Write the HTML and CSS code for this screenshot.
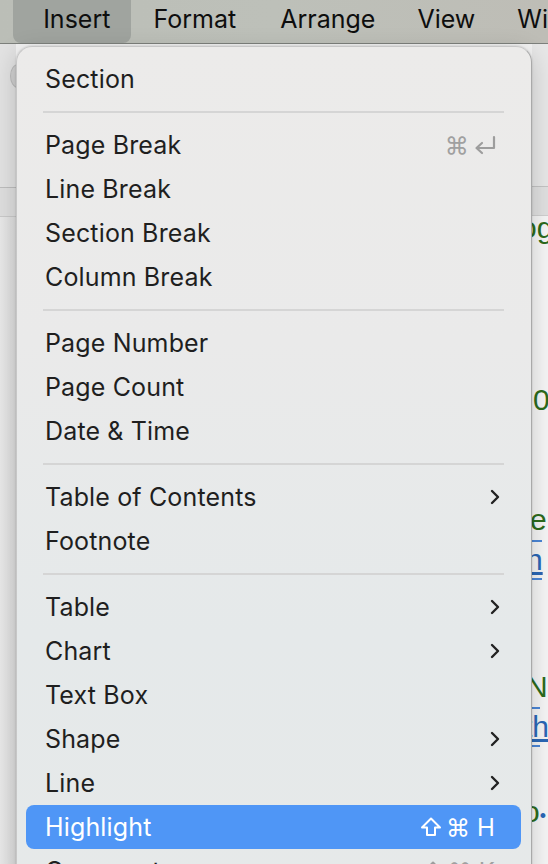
FILE: index.html
```html
<!DOCTYPE html>
<html>
<head>
<meta charset="utf-8">
<link rel="stylesheet" href="styles.css">
</head>
<body>
<div class="screen">
  <div class="menubar">
    <span class="mb-item mb-cut">t</span>
    <span class="mb-item active">Insert</span>
    <span class="mb-item">Format</span>
    <span class="mb-item">Arrange</span>
    <span class="mb-item">View</span>
    <span class="mb-item">Wi</span>
  </div>
  <div class="desk">
    <div class="gutter">
      <div class="g-top"><span class="g-dot"></span></div>
      <div class="g-band"></div>
      <div class="g-rest"></div>
    </div>
    <div class="spacer"></div>
    <div class="doc">
      <div class="d-top"></div>
      <div class="d-band"></div>
      <div class="d-body">
        <div class="d-line green l1">og</div>
        <div class="d-line green l2">0</div>
        <div class="d-line green l3">ei</div>
        <div class="d-link l4">n</div>
        <div class="d-line green l5">No</div>
        <div class="d-link l6">th</div>
        <div class="d-line green l7">o<span class="dot">•</span></div>
      </div>
    </div>
  </div>

  <div class="menu">
    <div class="item"><span class="label">Section</span></div>
    <div class="sep"></div>
    <div class="item"><span class="label">Page Break</span>
      <span class="sc grey">⌘<svg class="ret" width="24" height="20" viewBox="0 0 24 20"><path d="M21 2 V13 H4 M9 8 L3.5 13 L9 18" fill="none" stroke="#9d9d9d" stroke-width="2.2" stroke-linecap="round" stroke-linejoin="round"/></svg></span></div>
    <div class="item"><span class="label">Line Break</span></div>
    <div class="item"><span class="label">Section Break</span></div>
    <div class="item"><span class="label">Column Break</span></div>
    <div class="sep"></div>
    <div class="item"><span class="label">Page Number</span></div>
    <div class="item"><span class="label">Page Count</span></div>
    <div class="item"><span class="label">Date &amp; Time</span></div>
    <div class="sep"></div>
    <div class="item"><span class="label">Table of Contents</span><svg class="chev" width="12" height="18" viewBox="0 0 12 18"><path d="M3 3 L9 9 L3 15" fill="none" stroke="#222" stroke-width="2.4" stroke-linecap="round" stroke-linejoin="round"/></svg></div>
    <div class="item"><span class="label">Footnote</span></div>
    <div class="sep"></div>
    <div class="item"><span class="label">Table</span><svg class="chev" width="12" height="18" viewBox="0 0 12 18"><path d="M3 3 L9 9 L3 15" fill="none" stroke="#222" stroke-width="2.4" stroke-linecap="round" stroke-linejoin="round"/></svg></div>
    <div class="item"><span class="label">Chart</span><svg class="chev" width="12" height="18" viewBox="0 0 12 18"><path d="M3 3 L9 9 L3 15" fill="none" stroke="#222" stroke-width="2.4" stroke-linecap="round" stroke-linejoin="round"/></svg></div>
    <div class="item"><span class="label">Text Box</span></div>
    <div class="item"><span class="label">Shape</span><svg class="chev" width="12" height="18" viewBox="0 0 12 18"><path d="M3 3 L9 9 L3 15" fill="none" stroke="#222" stroke-width="2.4" stroke-linecap="round" stroke-linejoin="round"/></svg></div>
    <div class="item"><span class="label">Line</span><svg class="chev" width="12" height="18" viewBox="0 0 12 18"><path d="M3 3 L9 9 L3 15" fill="none" stroke="#222" stroke-width="2.4" stroke-linecap="round" stroke-linejoin="round"/></svg></div>
    <div class="item hl"><span class="label">Highlight</span>
      <span class="sc white"><svg class="shift" width="22" height="22" viewBox="0 0 22 22"><path d="M11 2.5 L20 11.5 H15 V19 H7 V11.5 H2 Z" fill="none" stroke="#fff" stroke-width="2" stroke-linejoin="round"/></svg>⌘ H</span></div>
    <div class="item"><span class="label">Comment</span>
      <span class="sc grey"><svg class="shift" width="22" height="22" viewBox="0 0 22 22"><path d="M11 2.5 L20 11.5 H15 V19 H7 V11.5 H2 Z" fill="none" stroke="#9d9d9d" stroke-width="2" stroke-linejoin="round"/></svg>⌘ K</span></div>
  </div>
</div>
</body>
</html>
```

FILE: styles.css
```css
html, body {
  margin: 0;
  padding: 0;
}
body {
  width: 548px;
  height: 864px;
  overflow: hidden;
  font-family: Inter, "Open Sans", "Liberation Sans", sans-serif;
  background: #f2f2f2;
}
.screen {
  position: relative;
  width: 548px;
  height: 864px;
  overflow: hidden;
}
.menubar {
  height: 43px;
  display: flex;
  align-items: stretch;
  background: linear-gradient(90deg, #bbbeb7 0%, #bdc0b9 50%, #bebdb6 100%);
  border-bottom: 1px solid #7d807c;
  font-size: 25px;
  color: #0e0e0e;
  white-space: nowrap;
}
.mb-item {
  display: flex;
  align-items: center;
  line-height: 34px;
  padding-bottom: 5px;
}
.mb-cut {
  width: 14px;
  overflow: hidden;
  text-indent: -10px;
  color: #111;
}
.active {
  background: #a0a49f;
  border-radius: 0 0 8px 8px;
  width: 123px;
  box-sizing: border-box;
  padding-left: 30px;
}
.mb-item:nth-child(3) { margin-left: 23px; }
.mb-item:nth-child(4) { margin-left: 44px; }
.mb-item:nth-child(5) { margin-left: 42px; }
.mb-item:nth-child(6) { margin-left: 42px; }

.desk {
  display: flex;
  height: 820px;
}
.gutter {
  width: 16px;
  display: flex;
  flex-direction: column;
}
.g-top {
  height: 143px;
  background: #e2e2e2;
  position: relative;
}
.g-dot {
  position: absolute;
  left: 10px;
  top: 20px;
  width: 14px;
  height: 22px;
  border-radius: 50%;
  background: #cfcfcf;
  border: 1px solid #bbb;
}
.g-band {
  height: 28px;
  background: #dedede;
  border-top: 1px solid #bdbdbd;
  border-bottom: 1px solid #c9c9c9;
}
.g-rest {
  flex: 1;
  background: linear-gradient(90deg, #e8e8e8, #dcdcdc);
}
.spacer {
  width: 516px;
}
.doc {
  width: 16px;
  display: flex;
  flex-direction: column;
  overflow: hidden;
}
.d-top {
  height: 142px;
  background: #e7e7e7;
}
.d-band {
  height: 28px;
  background: #e0e0e0;
  border-top: 1px solid #c3c3c3;
  border-bottom: 1px solid #cfcfcf;
}
.d-body {
  flex: 1;
  background: #f5f5f5;
  font-family: "Liberation Sans", Arial, sans-serif;
  font-size: 30px;
  white-space: nowrap;
}
.d-line, .d-link {
  position: relative;
  height: 36px;
  line-height: 36px;
}
.green { color: #2c6b1c; }
.d-link {
  color: #2a67b5;
  text-decoration: underline;
  border-top: 2px solid #4b86d6;
  border-bottom: 2px solid #4b86d6;
}
.l1 { margin-top: -6px; left: -12px; }
.l2 { margin-top: 136px; left: 1px; }
.l3 { margin-top: 84px; left: -2px; }
.l4 { margin-top: 2px; left: -6px; }
.l5 { margin-top: 89px; left: -6px; }
.l6 { margin-top: 2px; left: -8px; }
.l7 { margin-top: 47px; left: -9px; }
.dot { color: #2a67b5; font-size: 18px; }

.menu {
  position: absolute;
  left: 16px;
  top: 46px;
  width: 516px;
  height: 840px;
  box-sizing: border-box;
  padding: 10px 10px 0 9px;
  border-radius: 16px;
  background: linear-gradient(180deg, #ecebea 0%, #eaeaea 35%, #e5e9ea 70%, #e6e9e9 100%);
  border: 1px solid #c7c7c7;
  border-right-color: #a9a9a9;
  box-shadow: 0 6px 24px rgba(0,0,0,0.18), 0 0 2px rgba(0,0,0,0.2);
}
.item {
  height: 44px;
  display: flex;
  align-items: center;
  padding: 0 26px 0 19px;
  border-radius: 8px;
  font-size: 25px;
  color: #1f1f1f;
  letter-spacing: 0.15px;
}
.label {
  flex: 1;
}
.sep {
  height: 22px;
  display: flex;
  align-items: center;
  padding: 0 17px;
}
.sep::before {
  content: "";
  display: block;
  flex: 1;
  height: 2px;
  background: #d5d5d5;
}
.hl {
  background: #4f96f6;
  color: #fff;
}
.sc {
  display: flex;
  align-items: center;
  font-size: 24px;
  gap: 2px;
}
.grey { color: #a0a0a0; }
.white { color: #fff; font-size: 24px; }
.ret { margin-left: 2px; margin-right: -2px; }
.chev { margin-right: -6px; }
.shift { margin-right: 2px; }
```
